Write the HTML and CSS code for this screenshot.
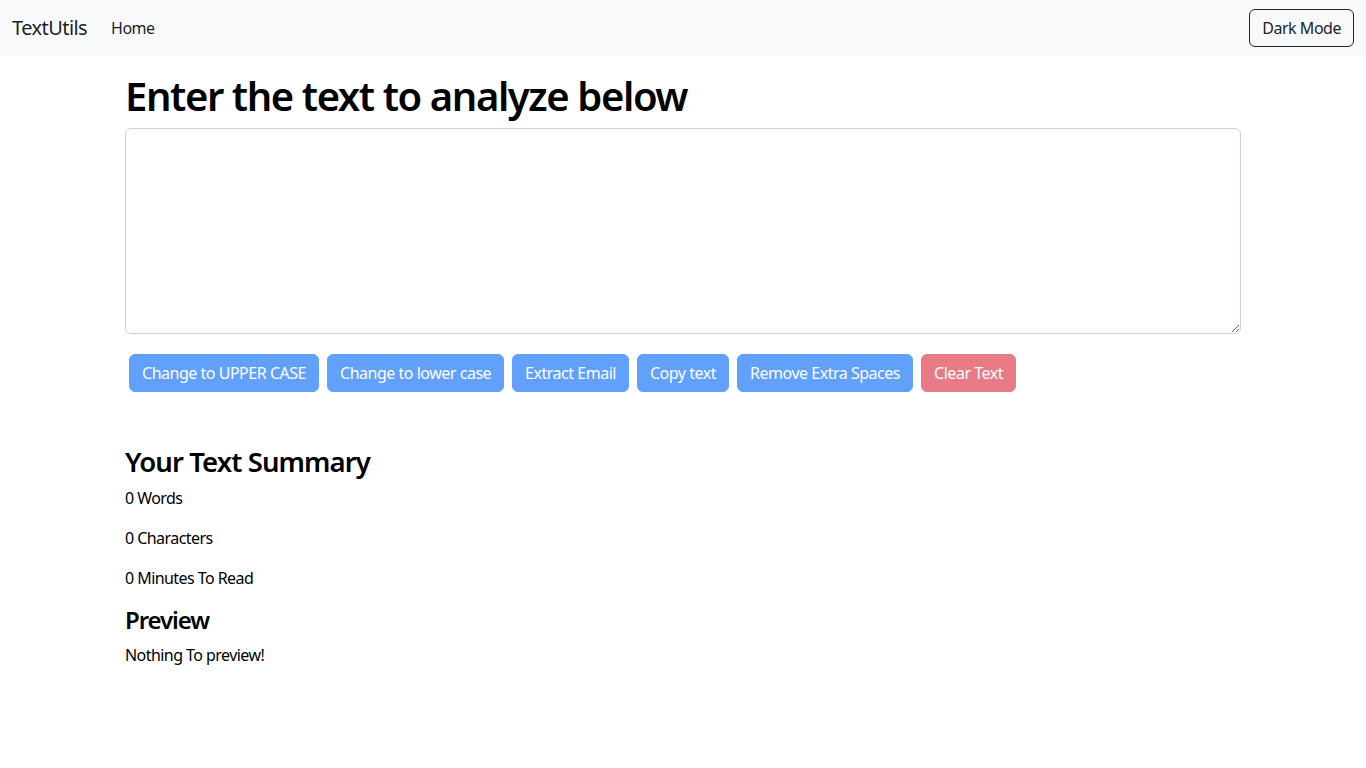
FILE: index.html
```html
<!DOCTYPE html>
<html lang="en">
<head>
<meta charset="utf-8">
<title>TextUtils</title>
<link rel="stylesheet" href="styles.css">
</head>
<body>
<nav class="navbar">
  <div class="nav-left">
    <a class="brand" href="#">TextUtils</a>
    <a class="nav-link" href="#">Home</a>
  </div>
  <button class="btn btn-outline-dark">Dark Mode</button>
</nav>
<main class="container">
  <section class="form-section">
    <h1 class="title">Enter the text to analyze below</h1>
    <textarea class="form-control" rows="8"></textarea>
    <div class="btn-row">
      <button class="btn btn-primary" disabled>Change to UPPER CASE</button>
      <button class="btn btn-primary" disabled>Change to lower case</button>
      <button class="btn btn-primary" disabled>Extract Email</button>
      <button class="btn btn-primary" disabled>Copy text</button>
      <button class="btn btn-primary" disabled>Remove Extra Spaces</button>
      <button class="btn btn-danger" disabled>Clear Text</button>
    </div>
  </section>
  <section class="summary">
    <h2 class="summary-title">Your Text Summary</h2>
    <p>0 Words</p>
    <p>0 Characters</p>
    <p>0 Minutes To Read</p>
    <h3 class="preview-title">Preview</h3>
    <p>Nothing To preview!</p>
  </section>
</main>
</body>
</html>
```

FILE: styles.css
```css
* { box-sizing: border-box; }
html, body { margin: 0; padding: 0; }
body {
  font-family: "Segoe UI", "Noto Sans", "Open Sans", sans-serif;
  font-size: 16px;
  line-height: 1.5;
  letter-spacing: -0.035em;
  color: #212529;
  background: #fff;
}
.navbar {
  display: flex;
  align-items: center;
  justify-content: space-between;
  height: 56px;
  padding: 8px 12px;
  background: #f8f9fa;
}
.nav-left { display: flex; align-items: center; }
.brand {
  font-size: 20px;
  line-height: 30px;
  padding: 5px 0;
  margin-right: 16px;
  color: rgba(0,0,0,.9);
  text-decoration: none;
}
.nav-link {
  padding: 8px;
  color: rgba(0,0,0,.9);
  text-decoration: none;
}
.btn {
  font-family: inherit;
  font-size: 16px;
  line-height: 24px;
  letter-spacing: -0.03em;
  padding: 6px 12px;
  border: 1px solid transparent;
  border-radius: 6px;
  background: transparent;
  cursor: pointer;
}
.btn-outline-dark {
  color: #212529;
  border-color: #212529;
}
.btn-primary {
  color: #fff;
  background: #0d6efd;
  border-color: #0d6efd;
}
.btn-danger {
  color: #fff;
  background: #dc3545;
  border-color: #dc3545;
}
.btn:disabled { opacity: .65; cursor: default; }
.container {
  width: 1140px;
  margin: 0 auto;
  padding: 16px 12px 0;
}
.title {
  font-size: 40px;
  font-weight: 600;
  line-height: 1.2;
  letter-spacing: -0.035em;
  color: #000;
  margin: 0 0 8px;
}
.form-control {
  display: block;
  width: 100%;
  height: 206px;
  padding: 6px 12px;
  font-family: inherit;
  font-size: 16px;
  line-height: 1.5;
  color: #212529;
  border: 1px solid #ced4da;
  border-radius: 6px;
  margin: 0 0 16px;
}
.btn-row { display: flex; flex-wrap: wrap; }
.btn-row .btn { margin: 4px; }
.summary { margin-top: 49px; color: #000; }
.summary-title {
  font-size: 27.5px;
  font-weight: 600;
  line-height: 1.2;
  letter-spacing: -0.033em;
  margin: 0 0 8px;
}
.summary p { margin: 0 0 16px; }
.preview-title {
  font-size: 24px;
  font-weight: 600;
  line-height: 1.2;
  letter-spacing: -0.045em;
  margin: 0 0 8px;
}
.summary p:last-child { margin-bottom: 0; }
```
